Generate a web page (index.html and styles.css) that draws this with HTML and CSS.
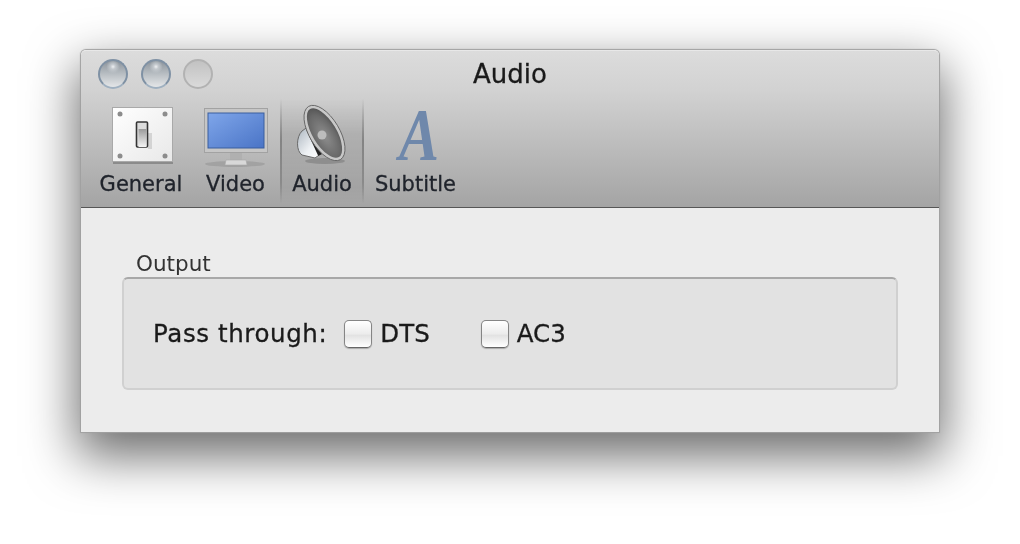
FILE: index.html
```html
<!DOCTYPE html>
<html lang="en">
    <head>
        <meta charset="UTF-8" />
        <title>Audio</title>
        <link rel="stylesheet" href="styles.css">
    </head>
    <body>
        <div class="window">
            <div class="top_area">
                <div class="title_bar">
                    <div class="lights">
                        <span class="light"></span>
                        <span class="light"></span>
                        <span class="light light_off"></span>
                    </div>
                    <div class="title">Audio</div>
                </div>
                <div class="toolbar">
                    <div class="tool tool_general">
                        <svg class="tool_icon" width="70" height="66" viewBox="0 0 70 66">
                            <defs>
                                <linearGradient id="plate" x1="0" y1="0" x2="1" y2="1">
                                    <stop offset="0" stop-color="#ffffff" />
                                    <stop offset="1" stop-color="#e8e8e8" />
                                </linearGradient>
                                <linearGradient id="lever" x1="0" y1="0" x2="0" y2="1">
                                    <stop offset="0" stop-color="#9a9a9a" />
                                    <stop offset="1" stop-color="#f4f4f4" />
                                </linearGradient>
                            </defs>
                            <rect x="7" y="56" width="60" height="3" fill="#6f6f6f" opacity="0.6" />
                            <rect x="6.5" y="2.5" width="60" height="54" fill="url(#plate)" stroke="#a9a9a9" />
                            <circle cx="14" cy="9" r="2.5" fill="#8c8c8c" />
                            <circle cx="59" cy="9" r="2.5" fill="#8c8c8c" />
                            <circle cx="14" cy="51" r="2.5" fill="#8c8c8c" />
                            <circle cx="59" cy="51" r="2.5" fill="#8c8c8c" />
                            <rect x="42" y="28" width="4" height="16" fill="#aaa" opacity="0.4" />
                            <rect x="30.5" y="17" width="11" height="25" fill="#dcdcdc" stroke="#333" stroke-width="1.6" rx="1" />
                            <rect x="32.5" y="24" width="8" height="18" fill="url(#lever)" />
                        </svg>
                        <span class="tool_label">General</span>
                    </div>
                    <div class="tool tool_video">
                        <svg class="tool_icon" width="70" height="66" viewBox="0 0 70 66">
                            <defs>
                                <linearGradient id="screen" x1="0" y1="0" x2="1" y2="1">
                                    <stop offset="0" stop-color="#7fa6ea" />
                                    <stop offset="1" stop-color="#4a74c6" />
                                </linearGradient>
                            </defs>
                            <ellipse cx="34" cy="59" rx="30" ry="3" fill="#7d7d7d" opacity="0.35" />
                            <rect x="3.5" y="3.5" width="63" height="44" fill="#c6c6c6" stroke="#a2a2a2" />
                            <rect x="7" y="8" width="56" height="35" fill="url(#screen)" stroke="#3a5e9e" />
                            <path d="M29 48h12v8H29z" fill="#b0b0b0" />
                            <path d="M25 55h20l1 5H24z" fill="#d8d8d8" stroke="#aaa" stroke-width="0.6" />
                        </svg>
                        <span class="tool_label">Video</span>
                    </div>
                    <div class="tool tool_selected">
                        <svg class="tool_icon speaker" width="70" height="66" viewBox="0 0 70 66">
                            <defs>
                                <radialGradient id="cone" cx="0.45" cy="0.55" r="0.6">
                                    <stop offset="0" stop-color="#8e8e8e" />
                                    <stop offset="0.65" stop-color="#6a6a6a" />
                                    <stop offset="1" stop-color="#4c4c4c" />
                                </radialGradient>
                                <linearGradient id="magnet" x1="0" y1="0" x2="1" y2="1">
                                    <stop offset="0" stop-color="#a8b2bc" />
                                    <stop offset="0.6" stop-color="#eef1f4" />
                                    <stop offset="1" stop-color="#ffffff" />
                                </linearGradient>
                            </defs>
                            <ellipse cx="38" cy="56" rx="20" ry="3" fill="#666" opacity="0.4" />
                            <path d="M15 26C9 32 9 46 15 50l13 3 7-5-13-27z" fill="url(#magnet)" stroke="#6a6a6a" />
                            <path d="M21 24l12 26" stroke="#222" stroke-width="4" />
                            <path d="M26 21l10 25" stroke="#555" stroke-width="2" />
                            <ellipse cx="37.5" cy="28" rx="13.5" ry="29.5" transform="rotate(-31 37.5 28)" fill="url(#cone)" stroke="#c8c8c8" stroke-width="3" />
                            <ellipse cx="37.5" cy="28" rx="15" ry="31" transform="rotate(-31 37.5 28)" fill="none" stroke="#5c5c5c" stroke-width="0.8" />
                            <circle cx="35" cy="30" r="4.5" fill="#bcbcbc" />
                        </svg>
                        <span class="tool_label">Audio</span>
                    </div>
                    <div class="tool tool_subtitle">
                        <svg class="tool_icon" width="70" height="66" viewBox="0 0 70 66">
                            <text class="letter_icon" x="0" y="55" transform="translate(18 0) scale(0.8 1)">A</text>
                        </svg>
                        <span class="tool_label">Subtitle</span>
                    </div>
                </div>
            </div>
            <div class="content">
                <div class="group_title">Output</div>
                <div class="group_box">
                    <span class="field_label">Pass through:</span>
                    <label class="check check_dts"><span class="check_box"></span>DTS</label>
                    <label class="check"><span class="check_box"></span>AC3</label>
                </div>
            </div>
        </div>
    </body>
</html>
```

FILE: styles.css
```css
body {
    margin: 0;
    width: 1020px;
    height: 544px;
    overflow: hidden;
    background-color: #ffffff;
    font-family: "DejaVu Sans", sans-serif;
    color: #1a1a1a;
}

.window {
    width: 858px;
    height: 382px;
    margin: 50px 0 0 81px;
    display: flex;
    flex-direction: column;
    background-color: #ececec;
    border-radius: 5px 5px 0 0;
    box-shadow: 0 0 1px 1px #a0a0a0, 0 20px 50px 4px rgba(0, 0, 0, 0.58);
}

.top_area {
    height: 156px;
    display: flex;
    flex-direction: column;
    background: linear-gradient(#dcdcdc, #d2d2d2 25%, #a4a4a4);
    border-top: 1px solid #e8e8e8;
    border-bottom: 1px solid #565656;
    border-radius: 5px 5px 0 0;
    filter: blur(0.6px);
}

.title_bar {
    height: 48px;
    flex-shrink: 0;
    display: flex;
    align-items: center;
    position: relative;
    padding-left: 17px;
}

.lights {
    display: flex;
    gap: 12.5px;
    margin-top: -2px;
}

.light {
    width: 26px;
    height: 26px;
    border-radius: 50%;
    border: 2px solid #7f91a4;
    border-bottom-color: #9fb0c0;
    background:
        radial-gradient(circle at 50% 22%, #eef0f2 0, #c4c9ce 10%, rgba(196, 201, 206, 0) 28%),
        linear-gradient(#8c949c, #b4babf 45%, #e4e6e8);
}

.light_off {
    border-color: #b2b2b2;
    background: linear-gradient(#c2c2c2, #dadada);
}

.title {
    position: absolute;
    left: 0;
    right: 0;
    top: 7px;
    text-align: center;
    font-size: 26px;
    line-height: 32px;
    -webkit-text-stroke: 0.3px #1a1a1a;
}

.toolbar {
    display: flex;
    height: 107px;
    padding-left: 10px;
}

.tool {
    width: 100px;
    box-sizing: border-box;
    display: flex;
    flex-direction: column;
    align-items: center;
}

.tool_icon {
    margin-top: 6px;
    flex-shrink: 0;
    overflow: visible;
}

.tool_label {
    margin-top: 0;
    font-size: 21px;
    line-height: 27px;
    color: #20242c;
    -webkit-text-stroke: 0.3px #20242c;
}

.tool_general {
    width: 100px;
}

.tool_video {
    width: 89px;
}

.tool_selected {
    width: 84px;
    height: 104px;
    background: linear-gradient(rgba(0, 0, 0, 0), rgba(0, 0, 0, 0.09) 35%, rgba(0, 0, 0, 0.05) 85%, rgba(0, 0, 0, 0));
    border-left: 2px solid;
    border-right: 2px solid;
    border-image: linear-gradient(rgba(90, 90, 90, 0), rgba(90, 90, 90, 0.5) 40%, rgba(90, 90, 90, 0.35) 80%, rgba(90, 90, 90, 0)) 1;
}

.tool_subtitle {
    width: 103px;
}

.letter_icon {
    font-family: "Liberation Serif", serif;
    font-style: italic;
    font-weight: bold;
    font-size: 75px;
    fill: #6f88ab;
}

.content {
    flex: 1;
    padding: 42px 41px 40px 41px;
    display: flex;
    flex-direction: column;
    filter: blur(0.5px);
}

.group_title {
    margin-left: 14px;
    font-size: 21.5px;
    line-height: 27px;
    color: #333;
}

.group_box {
    height: 113px;
    flex-shrink: 0;
    box-sizing: border-box;
    display: flex;
    align-items: center;
    padding: 0 0 0 29px;
    background-color: #e2e2e2;
    border: 2px solid #d0d0d0;
    border-top-color: #a8a8a8;
    border-radius: 6px;
    font-size: 24.5px;
    -webkit-text-stroke: 0.3px #1a1a1a;
}

.field_label {
    margin-right: 17px;
    letter-spacing: 0.6px;
}

.check {
    display: flex;
    align-items: center;
    gap: 8px;
}

.check_dts {
    margin-right: 51px;
}

.check_box {
    width: 28px;
    height: 28px;
    box-sizing: border-box;
    border: 1.5px solid #858585;
    border-bottom-color: #666;
    border-radius: 5px;
    background: linear-gradient(#ffffff, #ececec 50%, #e2e2e2 55%, #ffffff);
    box-shadow: 0 1px 1px rgba(0, 0, 0, 0.25);
}
```
